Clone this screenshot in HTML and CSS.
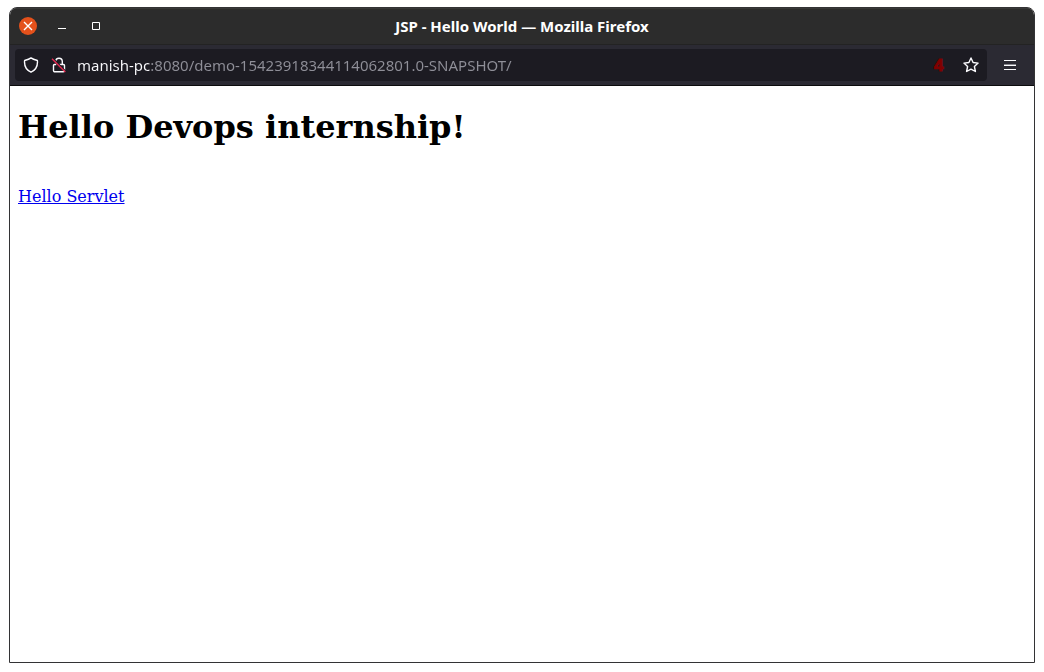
FILE: index.html
```html
<!DOCTYPE html>
<html lang="en">
<head>
<meta charset="utf-8">
<title>JSP - Hello World</title>
<link rel="stylesheet" href="styles.css">
</head>
<body>
<div class="window">
  <header class="titlebar">
    <div class="controls">
      <button class="control close" type="button" aria-label="Close"><svg width="18" height="18" viewBox="0 0 18 18"><circle cx="9" cy="9" r="9" fill="#e4511b"/><path d="M5 5l8 8M13 5l-8 8" stroke="#fff" stroke-width="1.400"/></svg></button>
      <button class="control" type="button" aria-label="Minimize"><svg width="18" height="18" viewBox="0 0 18 18"><path d="M5 11.500h8" stroke="#fff"/></svg></button>
      <button class="control" type="button" aria-label="Maximize"><svg width="18" height="18" viewBox="0 0 18 18"><path d="M5.500 5.500h7v7h-7z" fill="none" stroke="#fff"/></svg></button>
    </div>
    <div class="title">JSP - Hello World — Mozilla Firefox</div>
  </header>
  <nav class="toolbar">
    <div class="urlbar">
      <button class="icon" type="button" aria-label="Tracking protection"><svg width="16" height="16" viewBox="0 0 16 16"><path d="M8 .9C6.200 2.400 3.800 3 1.600 3.500 1.100 8.500 3 12.800 8 15.200c5-2.400 6.900-6.700 6.400-11.700C12.200 3 9.800 2.400 8 .9z" fill="none" stroke="#fbfbfe" stroke-width="1.400" stroke-linejoin="round"/></svg></button>
      <button class="icon" type="button" aria-label="Connection is not secure"><svg width="16" height="16" viewBox="0 0 16 16"><path d="M4.700 4.500a3.300 3.300 0 0 1 6.600 0v3M5.200 7.500H3.500a1 1 0 0 0-1 1v5a1.300 1.300 0 0 0 1.300 1.300h8.400a1.300 1.300 0 0 0 1.300-1.300v-5a1 1 0 0 0-1-1H8.500" fill="none" stroke="#fbfbfe" stroke-width="1.400"/><path d="M2.200 1.500L15 14.300" stroke="#1c1b22" stroke-width="1.200"/><path d="M1 1.700L14.300 15" stroke="#e22850" stroke-width="1.400"/></svg></button>
      <input class="address" type="text" aria-label="Address" spellcheck="false" value="manish-pc:8080/demo-15423918344114062801.0-SNAPSHOT/">
      <svg class="count" width="12" height="18" role="img" aria-label="4 notifications"><text class="count-text" x="1" y="15">4</text></svg>
      <button class="icon" type="button" aria-label="Bookmark this page"><svg width="16" height="16" viewBox="0 0 16 16"><path d="M8 1l2.100 4.500 5 .6-3.700 3.400 1 5L8 12.100l-4.400 2.400 1-5L.9 6.100l5-.6z" fill="none" stroke="#fbfbfe" stroke-width="1.400" stroke-linejoin="round"/></svg></button>
    </div>
    <button class="icon menu" type="button" aria-label="Open application menu"><svg width="16" height="16" viewBox="0 0 16 16"><path d="M2 3.500h12M2 8.500h12M2 12.500h12" stroke="#fbfbfe"/><path d="M2 7.500h12" stroke="#85858c"/></svg></button>
  </nav>
  <main class="page">
    <h1 class="heading">Hello Devops internship!</h1>
    <br>
    <a class="link" href="#hello-servlet">Hello Servlet</a>
  </main>
</div>
</body>
</html>
```
FILE: styles.css
```css
* { box-sizing: border-box; }
body {
  margin: 0;
  min-height: 100vh;
  padding: 7px 9px 9px;
  display: flex;
  background: #fff;
}
.window {
  flex: 1;
  display: flex;
  flex-direction: column;
  border: 1px solid #333335;
  border-radius: 8px 8px 0 0;
  overflow: hidden;
  font-family: "Noto Sans", "Open Sans", sans-serif;
}
.titlebar {
  display: grid;
  grid-template-columns: 1fr auto 1fr;
  align-items: center;
  height: 37px;
  padding-bottom: 1px;
  background: #2c2c2c;
  border-top: 1px solid #383838;
  border-bottom: 1px solid #232323;
}
.controls { display: flex; gap: 16px; padding-left: 9px; }
.control, .icon {
  display: flex;
  padding: 0;
  border: 0;
  background: none;
}
.title { color: #fff; font-size: 15px; font-weight: 700; line-height: 20px; }
.toolbar {
  display: flex;
  align-items: center;
  height: 41px;
  padding: 0 16px 0 5px;
  gap: 15px;
  background: #2b2a33;
  border-bottom: 1px solid #0c0c0d;
}
.urlbar {
  flex: 1;
  display: flex;
  align-items: center;
  gap: 12px;
  height: 32px;
  padding: 0 8px;
  border-radius: 4px;
  background: #1c1b22;
}
.address {
  flex: 1;
  min-width: 0;
  height: 24px;
  margin-left: -2px;
  padding: 0;
  border: 0;
  outline: 0;
  font: 15px/24px "Noto Sans", "Open Sans", sans-serif;
  color: transparent;
  caret-color: #fbfbfe;
  background: linear-gradient(to right, #fbfbfe 73px, #8f8f98 73px);
  -webkit-background-clip: text;
  background-clip: text;
}
.count { margin-right: 6px; }
.count-text {
  fill: #800000;
  stroke: #800000;
  stroke-width: 1px;
  font: 700 17px "Liberation Sans", sans-serif;
}
.page {
  flex: 1;
  padding: 0 8px;
  background: #fff;
  font: 16px/19px "DejaVu Serif", serif;
}
.heading { margin: 22px 0; font-size: 32px; line-height: 38px; }
.link { color: #0000ee; }
```
